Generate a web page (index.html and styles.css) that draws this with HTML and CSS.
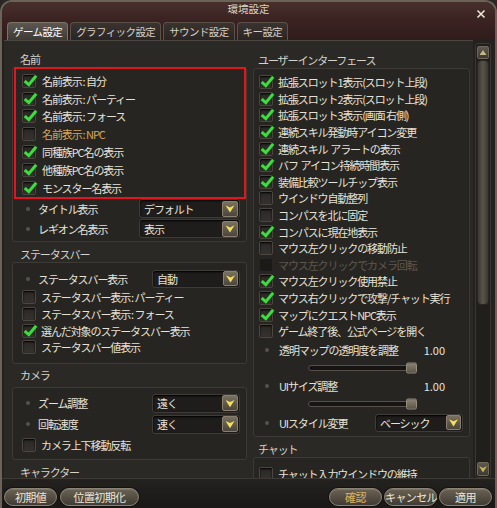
FILE: index.html
```html
<!DOCTYPE html>
<html lang="ja">
<head>
<meta charset="utf-8">
<title>環境設定</title>
<link rel="stylesheet" href="styles.css">
</head>
<body>
<div class="window">
  <header class="head">
    <div class="titlebar">
      <span></span>
      <h1 class="title">環境設定</h1>
      <div class="close"><svg viewBox="0 0 10 10" width="10" height="10"><path d="M1.5 1.5L8.5 8.5M8.5 1.5L1.5 8.5"/></svg></div>
    </div>
    <nav class="tabs">
      <div class="tab active">ゲーム設定</div>
      <div class="tab">グラフィック設定</div>
      <div class="tab">サウンド設定</div>
      <div class="tab">キー設定</div>
    </nav>
  </header>

  <main class="main">
    <div class="content">
      <div class="col col-left">
        <section>
          <h2 class="sec-head">名前</h2>
          <div class="panel panel-name">
            <div class="highlight">
              <div class="cbrow r18"><span class="cb on"></span><span>名前表示<span class="colon">:</span>自分</span></div>
              <div class="cbrow r18"><span class="cb on"></span><span>名前表示<span class="colon">:</span>パーティー</span></div>
              <div class="cbrow r18"><span class="cb on"></span><span>名前表示<span class="colon">:</span>フォース</span></div>
              <div class="cbrow r18"><span class="cb"></span><span class="npc">名前表示<span class="colon">:</span>NPC</span></div>
              <div class="cbrow r18"><span class="cb on"></span><span>同種族PC名の表示</span></div>
              <div class="cbrow r18"><span class="cb on"></span><span>他種族PC名の表示</span></div>
              <div class="cbrow r18"><span class="cb on"></span><span>モンスター名表示</span></div>
            </div>
            <div class="opt"><span class="dot"></span><span class="lbl">タイトル表示</span><div class="dd dd-101"><span>デフォルト</span><span class="arrow"></span></div></div>
            <div class="opt"><span class="dot"></span><span class="lbl">レギオン名表示</span><div class="dd dd-101"><span>表示</span><span class="arrow"></span></div></div>
          </div>
        </section>

        <section>
          <h2 class="sec-head">ステータスバー</h2>
          <div class="panel panel-status">
            <div class="opt"><span class="dot"></span><span class="lbl">ステータスバー表示</span><div class="dd dd-88 dd-short"><span>自動</span><span class="arrow"></span></div></div>
            <div class="cbrow r17 inset"><span class="cb"></span><span>ステータスバー表示<span class="colon">:</span>パーティー</span></div>
            <div class="cbrow r17 inset"><span class="cb"></span><span>ステータスバー表示<span class="colon">:</span>フォース</span></div>
            <div class="cbrow r17 inset"><span class="cb on"></span><span>選んだ対象のステータスバー表示</span></div>
            <div class="cbrow r17 inset"><span class="cb"></span><span>ステータスバー値表示</span></div>
          </div>
        </section>

        <section>
          <h2 class="sec-head tall">カメラ</h2>
          <div class="panel panel-camera">
            <div class="opt opt21"><span class="dot"></span><span class="lbl">ズーム調整</span><div class="dd dd-88"><span>遠く</span><span class="arrow"></span></div></div>
            <div class="opt opt21"><span class="dot"></span><span class="lbl">回転速度</span><div class="dd dd-88"><span>速く</span><span class="arrow"></span></div></div>
            <div class="cbrow r17 inset camera-cb"><span class="cb"></span><span>カメラ上下移動反転</span></div>
          </div>
        </section>

        <section>
          <h2 class="sec-head">キャラクター</h2>
        </section>
      </div>

      <div class="col col-right">
        <section>
          <h2 class="sec-head">ユーザーインターフェース</h2>
          <div class="panel panel-ui">
            <div class="cbrow r16"><span class="cb on"></span><span>拡張スロット1表示(スロット上段)</span></div>
            <div class="cbrow r16"><span class="cb on"></span><span>拡張スロット2表示(スロット上段)</span></div>
            <div class="cbrow r16"><span class="cb on"></span><span>拡張スロット3表示(画面 右側)</span></div>
            <div class="cbrow r16"><span class="cb on"></span><span>連続スキル発動時アイコン変更</span></div>
            <div class="cbrow r16"><span class="cb on"></span><span>連続スキル&nbsp; アラートの表示</span></div>
            <div class="cbrow r16"><span class="cb on"></span><span>バフ&nbsp; アイコン持続時間表示</span></div>
            <div class="cbrow r16"><span class="cb on"></span><span>装備比較ツールチップ表示</span></div>
            <div class="cbrow r16"><span class="cb"></span><span>ウインドウ自動整列</span></div>
            <div class="cbrow r16"><span class="cb"></span><span>コンパスを北に固定</span></div>
            <div class="cbrow r16"><span class="cb on"></span><span>コンパスに現在地表示</span></div>
            <div class="cbrow r16"><span class="cb"></span><span>マウス左クリックの移動防止</span></div>
            <div class="cbrow r16"><span class="cb disabled"></span><span class="dim">マウス左クリックでカメラ回転</span></div>
            <div class="cbrow r16"><span class="cb on"></span><span>マウス左クリック使用禁止</span></div>
            <div class="cbrow r16"><span class="cb on"></span><span>マウス右クリックで攻撃/チャット実行</span></div>
            <div class="cbrow r16"><span class="cb on"></span><span>マップにクエストNPC表示</span></div>
            <div class="cbrow r16"><span class="cb"></span><span>ゲーム終了後、公式ページを開く</span></div>
            <div class="opt"><span class="dot"></span><span class="lbl">透明マップの透明度を調整</span><span class="val">1.00</span></div>
            <div class="slider"><div class="track"><span class="knob"></span></div></div>
            <div class="opt"><span class="dot"></span><span class="lbl">UIサイズ調整</span><span class="val">1.00</span></div>
            <div class="slider"><div class="track"><span class="knob"></span></div></div>
            <div class="opt opt22"><span class="dot"></span><span class="lbl">UIスタイル変更</span><div class="dd dd-88 dd-short"><span>ベーシック</span><span class="arrow"></span></div></div>
          </div>
        </section>
        <section>
          <h2 class="sec-head">チャット</h2>
          <div class="panel panel-chat">
            <div class="cbrow r16"><span class="cb"></span><span>チャット入力ウインドウの維持</span></div>
          </div>
        </section>
      </div>
    </div>

    <div class="scrollbar">
      <div class="sb-btn sb-up"></div>
      <div class="sb-thumb"></div>
      <div class="sb-track"></div>
      <div class="sb-btn sb-down"></div>
    </div>
  </main>

  <footer class="footer">
    <div class="btn">初期値</div>
    <div class="btn btn-wide">位置初期化</div>
    <div class="spacer"></div>
    <div class="btn btn-ok">確認</div>
    <div class="btn">キャンセル</div>
    <div class="btn">適用</div>
  </footer>
</div>
</body>
</html>
```

FILE: styles.css
```css
* { box-sizing: border-box; margin: 0; padding: 0; }
html, body { width: 497px; height: 508px; overflow: hidden; }
body {
  background: #2a2826;
  font-family: "Noto Sans CJK JP", "Noto Sans", sans-serif;
  font-size: 11px;
  letter-spacing: -1.1px;
  color: #e6e2d8;
}

.window {
  width: 497px;
  height: 508px;
  display: flex;
  flex-direction: column;
  background: #1d1b19;
  border: 2px solid #6b6358;
  border-bottom: 0;
  border-radius: 12px 12px 0 0;
  overflow: hidden;
}

/* header */
.head {
  height: 38px;
  flex: none;
  display: flex;
  flex-direction: column;
  background: linear-gradient(180deg, #47302c 0%, #3b2322 45%, #301c1b 100%);
}
.titlebar {
  height: 20px;
  display: grid;
  grid-template-columns: 1fr auto 1fr;
  align-items: start;
}
.title {
  font-size: 10.5px;
  font-weight: normal;
  line-height: 14px;
  margin-top: 0;
  letter-spacing: 0;
  color: #d9d4ca;
}
.close {
  justify-self: end;
  width: 10px;
  height: 10px;
  margin: 7px 9px 0 0;
}
.close svg { display: block; stroke: #ebe6d2; stroke-width: 1.6; fill: none; }

.tabs {
  height: 18px;
  display: flex;
  align-items: flex-end;
  gap: 2px;
  padding-left: 5px;
}
.tab {
  height: 18px;
  padding: 0 5px;
  border: 1px solid #5b534a;
  border-bottom: 0;
  border-radius: 4px 4px 0 0;
  background: linear-gradient(#3a3330, #2a2523);
  color: #d4cfc6;
  font-size: 10.5px;
  line-height: 17px;
  letter-spacing: -0.6px;
}
.tab.active {
  background: linear-gradient(#5d5751, #3e3a35);
  border-color: #7b7368;
  color: #ffffff;
}

/* main area */
.main {
  height: 438px;
  flex: none;
  display: flex;
  background: #24211e;
}
.content {
  width: 469px;
  margin-left: 2px;
  background: #2b2926;
  border-top: 1px solid #4b463f;
  display: grid;
  grid-template-columns: 235px 217px;
  column-gap: 6px;
  padding: 0 3px 0 8px;
  overflow: hidden;
  align-items: start;
}
.col-left { padding-top: 6px; }
.col-right { padding-top: 7px; }

.sec-head {
  height: 20px;
  padding-top: 4px;
  line-height: 16px;
  font-size: 11px;
  font-weight: normal;
  color: #d8d3c8;
}
.col-left .sec-head { padding-left: 8px; }
.col-right .sec-head { padding-left: 5px; }
.sec-head.tall { height: 23px; padding-top: 3px; }

.panel {
  border: 1px solid #3d3a35;
  border-radius: 3px;
  background: #272522;
}
.panel-name { padding-bottom: 2px; }
.panel-status { padding: 6px 0 7px; }
.panel-camera { padding: 5px 0 5px; }
.panel-ui { padding: 5px 0 2px; }
.panel-chat { padding-top: 8px; height: 40px; }

.highlight {
  margin: -1px 0 0 1px;
  border: 2px solid #e3141b;
  padding: 3px 0 0 6px;
}

/* checkbox rows */
.cbrow {
  display: flex;
  align-items: center;
  gap: 5px;
  white-space: nowrap;
}
.r18 { height: 17.8px; gap: 6px; }
.r17 { height: 16.8px; }
.r16 { height: 16.6px; padding-left: 5px; }
.cbrow.inset { padding-left: 9px; }
.camera-cb { height: 17px; margin-top: 2px; }
.colon { margin: 0 1.5px 0 1px; }

.cb {
  flex: none;
  position: relative;
  width: 14px;
  height: 14px;
  border: 1px solid #4b4640;
  border-radius: 2px;
  background: linear-gradient(#2a2724, #36322f);
  box-shadow: inset 0 1px 2px #000;
}
.cb.on::after {
  content: "";
  position: absolute;
  left: 4px;
  top: -2px;
  width: 4px;
  height: 10px;
  border-right: 3px solid #3fdc3f;
  border-bottom: 3px solid #3fdc3f;
  transform: rotate(40deg);
  filter: drop-shadow(0 0 1px #0a3a0a);
}
.cb.disabled {
  background: #1b1a18;
  border-color: #282623;
  box-shadow: none;
}
.npc { color: #d7a552; }
.dim { color: #5c5850; }

/* bullet option rows */
.opt {
  display: flex;
  align-items: center;
  height: 20px;
  white-space: nowrap;
}
.opt21 { height: 21px; }
.opt22 { height: 22px; }
.dot {
  flex: none;
  width: 4px;
  height: 4px;
  border-radius: 50%;
  background: #56524b;
  margin: 0 8px 0 13px;
}
.col-right .dot { margin: 0 10px 0 11px; }
.lbl { flex: 1; }
.val { margin-right: 24px; letter-spacing: 0; color: #e6e2d8; }

.dd {
  flex: none;
  display: flex;
  align-items: center;
  justify-content: space-between;
  height: 19px;
  margin-right: 6px;
  padding-left: 4px;
  border: 1px solid #3f3b36;
  border-radius: 3px;
  background: #1f1d1b;
  box-shadow: inset 0 1px 2px #000;
}
.dd-short { height: 18px; }
.dd-101 { width: 101px; }
.dd-88 { width: 88px; }
.arrow {
  flex: none;
  display: grid;
  place-items: center;
  width: 16px;
  height: 16px;
  margin-right: 1px;
  border: 1px solid #8a8070;
  border-radius: 2px;
  background: linear-gradient(#78705f, #4b453c);
}
.dd-short .arrow { width: 15px; height: 15px; }
.arrow::after {
  content: "";
  width: 9px;
  height: 8px;
  background: #f5e05a;
  clip-path: polygon(0 8%, 50% 35%, 100% 8%, 50% 100%);
}

/* sliders */
.slider {
  height: 16px;
  display: flex;
  align-items: center;
  padding-left: 54px;
}
.track {
  position: relative;
  width: 109px;
  height: 6px;
  border: 1px solid #57514a;
  border-radius: 3px;
  background: #161513;
}
.knob {
  position: absolute;
  right: -1px;
  top: 50%;
  transform: translateY(-50%);
  width: 11px;
  height: 11px;
  border: 1px solid #958c7b;
  border-radius: 2px;
  background: linear-gradient(#8a8272, #5b554a);
}

/* scrollbar */
.scrollbar {
  flex: none;
  width: 16px;
  margin: 3px 0 0 2px;
  padding: 2px 1px 1px;
  border: 1px solid #3a3631;
  border-radius: 3px;
  background: #211f1c;
  display: flex;
  flex-direction: column;
  gap: 1px;
}
.sb-btn {
  flex: none;
  width: 12px;
  height: 13px;
  border: 1px solid #6f6759;
  border-radius: 2px;
  background: linear-gradient(#5f584c, #3d3832);
  display: grid;
  place-items: center;
}
.sb-up::after {
  content: "";
  width: 7px;
  height: 5px;
  background: #c4b983;
  clip-path: polygon(50% 0, 100% 100%, 0 100%);
}
.sb-down { height: 14px; }
.sb-down::after {
  content: "";
  width: 8px;
  height: 7px;
  background: #c9b556;
  clip-path: polygon(0 8%, 50% 35%, 100% 8%, 50% 100%);
}
.sb-thumb {
  flex: none;
  height: 245px;
  border: 1px solid #2a2724;
  border-radius: 4px;
  background: linear-gradient(90deg, #3b3731, #5a5449 50%, #3b3731);
}
.sb-track { flex: 1; }

/* footer */
.footer {
  height: 30px;
  flex: none;
  display: flex;
  align-items: flex-start;
  gap: 3px;
  padding: 9px 3px 0 2px;
  border-top: 1px solid #3d3934;
  background: linear-gradient(#24221f, #1a1816);
}
.spacer { flex: 1; }
.btn {
  flex: none;
  width: 53px;
  height: 18px;
  border: 1px solid #8b8373;
  border-radius: 9px;
  background: linear-gradient(#6a6253, #403b34);
  box-shadow: 0 0 0 1px #141311, inset 0 1px 0 rgba(255, 255, 255, 0.12);
  color: #ece6d8;
  font-size: 11px;
  line-height: 16px;
  letter-spacing: -0.6px;
  text-align: center;
  white-space: nowrap;
}
.btn-wide { width: 79px; }
.btn-ok { color: #e2b25e; }
.btn-ok ~ .btn { margin-left: -1px; }
```
